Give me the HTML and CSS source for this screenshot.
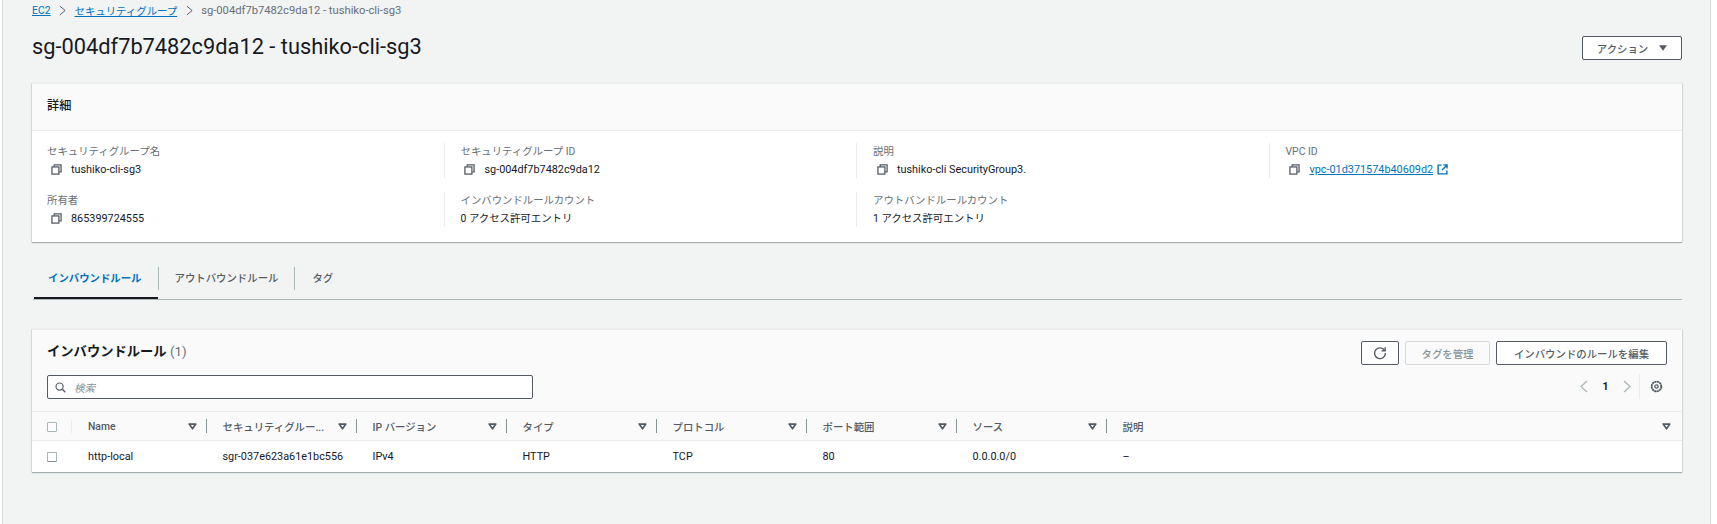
FILE: index.html
```html
<!DOCTYPE html>
<html lang="ja">
<head>
    <meta charset="UTF-8">
    <title>sg-004df7b7482c9da12 - tushiko-cli-sg3</title>
    <link rel="stylesheet" href="styles.css">
</head>
<body>
<svg class="defs" width="0" height="0">
    <symbol id="copy" viewBox="0 0 12 12">
        <path d="M3.5 3V1h7.5v7.5H9" fill="none" stroke="currentColor" stroke-width="1.4"/>
        <rect x="1" y="3.2" width="7.6" height="7.8" fill="none" stroke="currentColor" stroke-width="1.4"/>
    </symbol>
    <symbol id="caret" viewBox="0 0 10 8">
        <path d="M1.2 1.2h7.6L5 6.6z" fill="none" stroke="currentColor" stroke-width="1.9" stroke-linejoin="round"/>
    </symbol>
</svg>
<div class="page">
    <nav class="crumbs">
        <a href="#">EC2</a>
        <svg class="crumb_sep" viewBox="0 0 8 12"><path d="M1 1l6 5-6 5" fill="none" stroke="currentColor" stroke-width="1.1"/></svg>
        <a href="#">セキュリティグループ</a>
        <svg class="crumb_sep" viewBox="0 0 8 12"><path d="M1 1l6 5-6 5" fill="none" stroke="currentColor" stroke-width="1.1"/></svg>
        <span class="crumb_now">sg-004df7b7482c9da12 - tushiko-cli-sg3</span>
    </nav>

    <header class="page_head">
        <h1>sg-004df7b7482c9da12 - tushiko-cli-sg3</h1>
        <button class="btn btn_action">アクション
            <svg class="action_caret" viewBox="0 0 10 7"><path d="M0 0h10L5 7z" fill="currentColor"/></svg>
        </button>
    </header>

    <section class="card">
        <div class="card_head detail_head"><h2>詳細</h2></div>
        <div class="detail_grid">
            <div class="item first">
                <div class="label">セキュリティグループ名</div>
                <div class="value"><svg class="copy"><use href="#copy"/></svg>tushiko-cli-sg3</div>
            </div>
            <div class="item">
                <div class="label">セキュリティグループ ID</div>
                <div class="value"><svg class="copy"><use href="#copy"/></svg>sg-004df7b7482c9da12</div>
            </div>
            <div class="item">
                <div class="label">説明</div>
                <div class="value"><svg class="copy"><use href="#copy"/></svg>tushiko-cli SecurityGroup3.</div>
            </div>
            <div class="item">
                <div class="label">VPC ID</div>
                <div class="value"><svg class="copy"><use href="#copy"/></svg>
                    <a href="#" class="vpc_link">vpc-01d371574b40609d2</a>
                    <svg class="ext" viewBox="0 0 12 12"><path d="M5 1.2H1.2v9.6h9.6V7M7 1h4v4M11 1L5.5 6.5" fill="none" stroke="currentColor" stroke-width="1.5"/></svg>
                </div>
            </div>
            <div class="item first">
                <div class="label">所有者</div>
                <div class="value"><svg class="copy"><use href="#copy"/></svg>865399724555</div>
            </div>
            <div class="item">
                <div class="label">インバウンドルールカウント</div>
                <div class="value value_jp">0 アクセス許可エントリ</div>
            </div>
            <div class="item">
                <div class="label">アウトバンドルールカウント</div>
                <div class="value value_jp">1 アクセス許可エントリ</div>
            </div>
            <div class="item blank"></div>
        </div>
    </section>

    <div class="tabs">
        <div class="tab tab_on"><span>インバウンドルール</span></div>
        <div class="tab tab_out"><span>アウトバウンドルール</span></div>
        <div class="tab tab_tag"><span>タグ</span></div>
    </div>

    <section class="card rules">
        <div class="card_head rules_head">
            <div class="rules_left">
                <h2>インバウンドルール <span class="count">(1)</span></h2>
                <div class="search">
                    <svg class="search_icon" viewBox="0 0 12 12"><circle cx="5" cy="5" r="3.9" fill="none" stroke="currentColor" stroke-width="1.3"/><path d="M8 8l3.2 3.2" stroke="currentColor" stroke-width="1.5"/></svg>
                    <span>検索</span>
                </div>
            </div>
            <div class="rules_right">
                <div class="rule_btns">
                    <button class="btn btn_icon">
                        <svg class="refresh" viewBox="0 0 14 14"><path d="M11.6 4.4A5.4 5.4 0 1 0 12.4 7" fill="none" stroke="currentColor" stroke-width="1.4"/><path d="M8.6 4.8h3.6V1.2" fill="none" stroke="currentColor" stroke-width="1.4"/></svg>
                    </button>
                    <button class="btn btn_off">タグを管理</button>
                    <button class="btn btn_edit">インバウンドのルールを編集</button>
                </div>
                <div class="pager">
                    <svg class="pager_arrow" viewBox="0 0 8 13"><path d="M7 1L1 6.5l6 5.5" fill="none" stroke="currentColor" stroke-width="1.2"/></svg>
                    <span class="pager_num">1</span>
                    <svg class="pager_arrow" viewBox="0 0 8 13"><path d="M1 1l6 5.5-6 5.5" fill="none" stroke="currentColor" stroke-width="1.2"/></svg>
                    <span class="pager_gear">
                        <svg class="gear" viewBox="0 0 14 14">
                            <circle cx="7" cy="7" r="5.2" fill="none" stroke="currentColor" stroke-width="2" stroke-dasharray="2.3 0.4"/>
                            <circle cx="7" cy="7" r="1.8" fill="none" stroke="currentColor" stroke-width="1.3"/>
                        </svg>
                    </span>
                </div>
            </div>
        </div>

        <div class="row row_head">
            <div class="cell cell_check"><i class="check"></i></div>
            <div class="cell">Name<svg class="sort"><use href="#caret"/></svg></div>
            <div class="cell">セキュリティグルー...<svg class="sort"><use href="#caret"/></svg></div>
            <div class="cell">IP バージョン<svg class="sort"><use href="#caret"/></svg></div>
            <div class="cell">タイプ<svg class="sort"><use href="#caret"/></svg></div>
            <div class="cell">プロトコル<svg class="sort"><use href="#caret"/></svg></div>
            <div class="cell">ポート範囲<svg class="sort"><use href="#caret"/></svg></div>
            <div class="cell">ソース<svg class="sort"><use href="#caret"/></svg></div>
            <div class="cell cell_last">説明<svg class="sort"><use href="#caret"/></svg></div>
        </div>
        <div class="row row_body">
            <div class="cell cell_check"><i class="check"></i></div>
            <div class="cell">http-local</div>
            <div class="cell">sgr-037e623a61e1bc556</div>
            <div class="cell">IPv4</div>
            <div class="cell">HTTP</div>
            <div class="cell">TCP</div>
            <div class="cell">80</div>
            <div class="cell">0.0.0.0/0</div>
            <div class="cell">–</div>
        </div>
    </section>
</div>
</body>
</html>
```

FILE: styles.css
```css
* {
    margin: 0;
    padding: 0;
    box-sizing: border-box;
}

html, body {
    height: 524px;
    overflow: hidden;
    background: #fff;
}

body {
    font-family: Roboto, "Noto Sans CJK JP", sans-serif;
    font-size: 10.4px;
    color: #16191f;
}

.defs {
    display: block;
    height: 0;
}

.page {
    width: 1709px;
    height: 524px;
    margin-left: 2px;
    padding: 0 28px 0 29px;
    background: #f2f3f3;
    border-left: 1px solid #d5dbdb;
    border-right: 1px solid #d5dbdb;
}

a {
    color: #0073bb;
}

/* breadcrumb */
.crumbs {
    height: 20px;
    display: flex;
    align-items: center;
    color: #687078;
}

.crumb_sep {
    width: 7px;
    height: 11px;
    margin: 0 8.5px;
    color: #545b64;
}

.crumb_now {
    font-size: 11.2px;
}

/* title */
.page_head {
    height: 63px;
    display: flex;
    justify-content: space-between;
    padding-top: 16px;
}

h1 {
    font-size: 21.8px;
    font-weight: 400;
    line-height: 20px;
    padding-top: 1px;
}

.btn {
    font-family: inherit;
    font-size: 10.4px;
    font-weight: 500;
    background: #fff;
    color: #545b64;
    border: 1px solid #545b64;
    border-radius: 2px;
    height: 24px;
}

.btn_action {
    width: 100px;
    display: flex;
    align-items: center;
    justify-content: center;
    gap: 11px;
}

.action_caret {
    width: 8px;
    height: 6px;
}

/* cards */
.card {
    background: #fff;
    border-top: 1px solid #eaeded;
    box-shadow: 0 1px 1px rgba(0, 28, 36, .3), 1px 0 1px rgba(0, 28, 36, .08), -1px 0 1px rgba(0, 28, 36, .08);
}

.card_head {
    background: #fafafa;
    border-bottom: 1px solid #eaeded;
}

.detail_head {
    height: 47px;
    padding: 14px 15px 0;
}

.detail_head h2 {
    font-weight: 500;
}

h2 {
    font-size: 12.2px;
    font-weight: 700;
    line-height: 16px;
}

.detail_grid {
    display: grid;
    grid-template-columns: 411.5px 412.5px 412.5px 413.5px;
    grid-auto-rows: 35px;
    row-gap: 14px;
    padding: 12px 0 15px;
    height: 111px;
}

.item {
    border-left: 1px solid #eaeded;
    padding-left: 16px;
}

.item.first {
    border-left: none;
    padding-left: 15px;
}

.item.blank {
    border-left: none;
}

.label {
    color: #687078;
    line-height: 14px;
    margin-top: 1.5px;
}

.value {
    display: flex;
    align-items: center;
    height: 14px;
    margin-top: 4px;
    line-height: 14px;
    font-size: 10.85px;
}

.value_jp {
    font-size: 10.4px;
}

.copy {
    width: 11px;
    height: 11px;
    margin: 0 9.5px 0 3.5px;
    color: #545b64;
    flex: none;
}

.vpc_link {
    text-decoration: underline;
}

.ext {
    width: 11px;
    height: 11px;
    margin-left: 4px;
    color: #0073bb;
}

/* tabs */
.tabs {
    height: 58px;
    display: flex;
    align-items: flex-start;
    padding-top: 25px;
    margin-left: 1px;
    border-bottom: 1px solid #aab7b8;
}

.tab {
    height: 32px;
    color: #545b64;
    font-weight: 500;
    display: flex;
    align-items: flex-start;
}

.tab span {
    display: block;
    height: 23px;
    line-height: 23px;
    padding: 0 16px 0 17px;
    border-right: 1px solid #aab7b8;
}

.tab_tag span {
    border-right: none;
}

.tab_on {
    color: #0073bb;
    border-bottom: 2px solid #16191f;
    font-weight: 700;
    margin-left: 1px;
}

.tab_on span {
    padding: 0 16px 0 14px;
    margin-right: -1px;
}

/* rules table */
.rules {
    margin-top: 29px;
}

.rules_head {
    height: 82px;
    display: flex;
    justify-content: space-between;
    padding: 11px 15px 0;
}

.rules_left h2 {
    height: 20px;
    line-height: 20px;
    font-size: 13.3px;
    padding-top: 1px;
}

.count {
    font-weight: 400;
    color: #687078;
}

.search {
    width: 486px;
    height: 24px;
    margin-top: 14px;
    background: #fff;
    border: 1px solid #545b64;
    border-radius: 2px;
    display: flex;
    align-items: center;
    padding-left: 7px;
    font-style: italic;
    color: #879596;
}

.search_icon {
    width: 11px;
    height: 11px;
    margin-right: 8px;
    color: #545b64;
}

.rules_right {
    display: flex;
    flex-direction: column;
    align-items: flex-end;
}

.rule_btns {
    display: flex;
    gap: 6px;
}

.btn_icon {
    width: 38px;
    color: #545b64;
    display: flex;
    align-items: center;
    justify-content: center;
}

.refresh {
    width: 14px;
    height: 14px;
}

.btn_off {
    width: 85px;
    background: #fafafa;
    color: #879596;
    border-color: #d5dbdb;
}

.btn_edit {
    width: 171px;
}

.pager {
    display: flex;
    align-items: center;
    height: 25px;
    margin-top: 9px;
    color: #aab7b8;
}

.pager_arrow {
    width: 8px;
    height: 13px;
}

.pager_num {
    width: 35px;
    text-align: center;
    font-weight: 700;
    color: #16191f;
}

.pager_gear {
    display: flex;
    align-items: center;
    height: 25px;
    margin-left: 8px;
    padding: 0 4px 0 10px;
    border-left: 1px solid #eaeded;
    color: #545b64;
}

.gear {
    width: 13px;
    height: 13px;
}

.row {
    display: grid;
    grid-template-columns: 40px 134.5px repeat(6, 150px) 1fr;
}

.row_head {
    height: 29px;
    background: #fafafa;
    border-bottom: 1px solid #eaeded;
    color: #545b64;
    font-weight: 500;
}

.row_body {
    height: 31px;
    font-size: 10.85px;
}

.cell {
    display: flex;
    align-items: center;
    padding-left: 16px;
}

.row_head .cell:not(.cell_check)::after {
    content: "";
    width: 1px;
    height: 14px;
    background: #879596;
}

.row_head .cell_last::after {
    display: none;
}

.cell_check {
    padding-left: 15px;
}

.row_head .cell_check {
    border-right: 1px solid #eaeded;
    margin: 8px 0 7px;
}

.check {
    display: block;
    width: 10px;
    height: 10px;
    background: #fff;
    border: 1px solid #aab7b8;
    border-radius: 1px;
}

.row_body .check {
    border-bottom-color: #879596;
}

.sort {
    width: 9px;
    height: 7px;
    margin-left: auto;
    margin-right: 9px;
    color: #545b64;
    flex: none;
}

.cell_last .sort {
    margin-right: 11px;
}
```
